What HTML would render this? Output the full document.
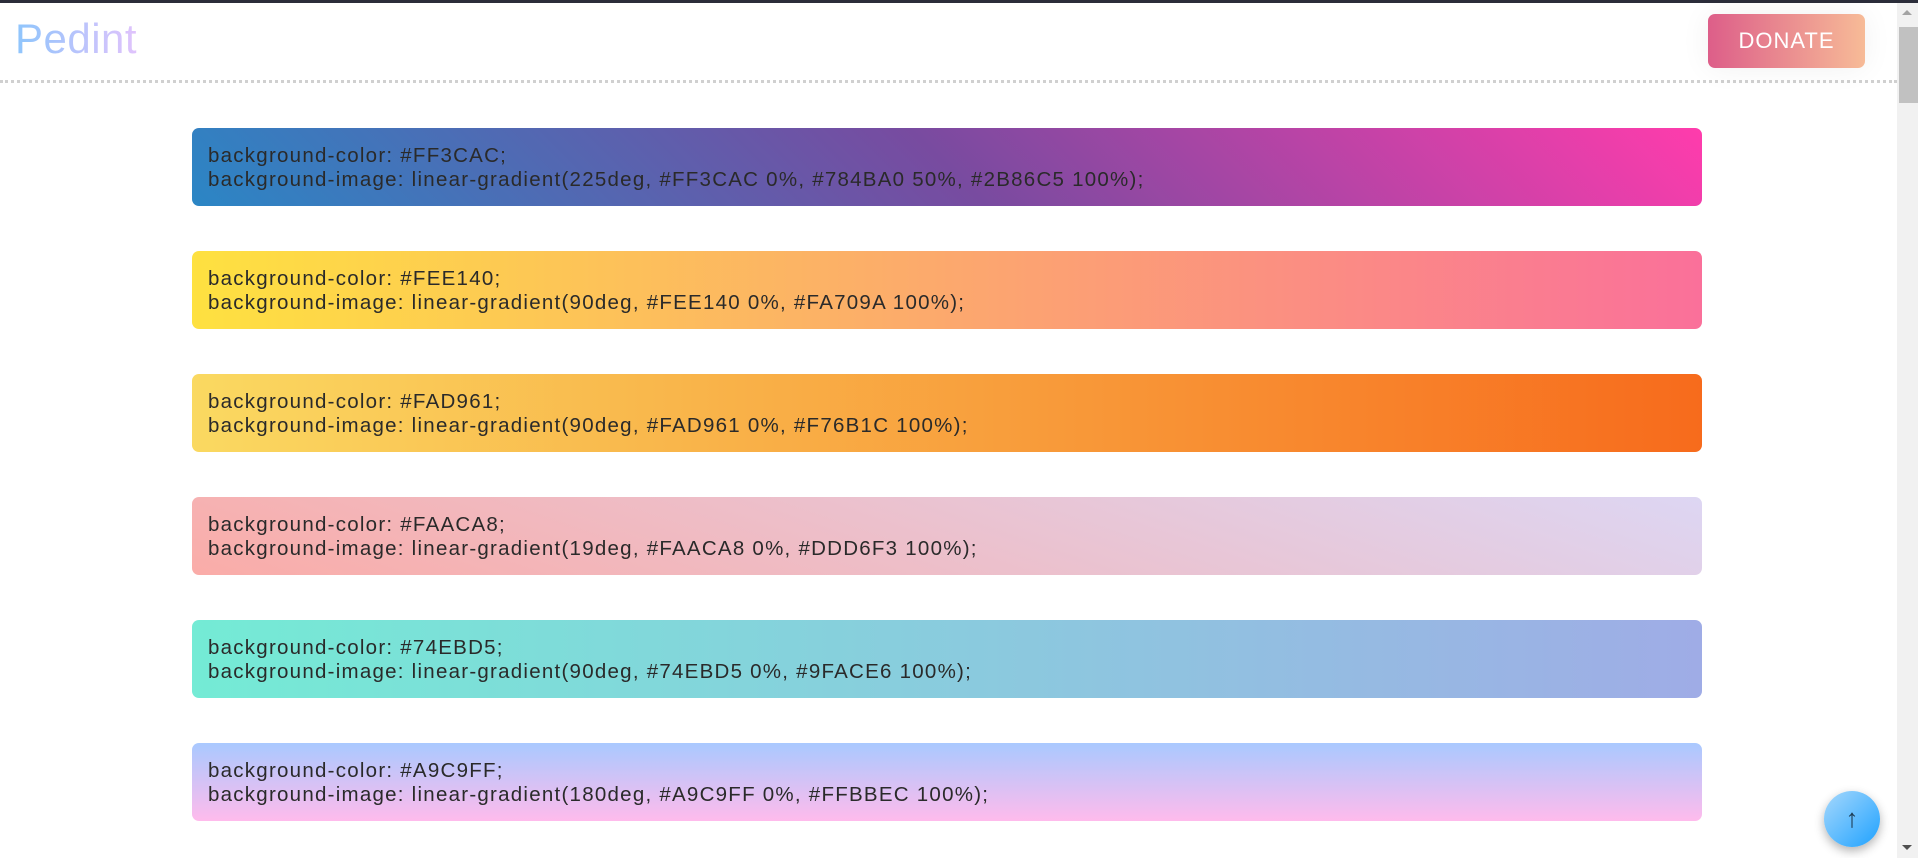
<!DOCTYPE html>
<html><head><meta charset="utf-8"><style>
html,body{margin:0;padding:0;width:1918px;height:858px;overflow:hidden;background:#fff;font-family:"Liberation Sans",sans-serif}
.top{position:absolute;left:0;top:0;width:1918px;height:3px;background:#2b2d3a}
.logo{position:absolute;left:15px;top:13px;font-size:42px;font-weight:300;line-height:52px;background:linear-gradient(90deg,#8ec5fc,#e0c3fc);-webkit-background-clip:text;color:transparent;letter-spacing:0.5px}
.dash{position:absolute;left:0;top:80px;width:1897px;border-top:3px dotted #d0d0d0}
.donate{position:absolute;left:1708px;top:14px;width:157px;height:54px;border-radius:7px;background:linear-gradient(90deg,#dd5e89,#f7bb97);color:#fff;font-size:22px;line-height:54px;text-align:center;letter-spacing:1px;box-shadow:0 0 30px rgba(0,0,0,.06)}
.sb{position:absolute;left:1897px;top:3px;width:21px;height:855px;background:#f1f1f1}
.thumb{position:absolute;left:1899px;top:27px;width:19px;height:76px;background:#c1c1c1}
.card{position:absolute;left:192px;width:1510px;height:78px;border-radius:7px;box-sizing:border-box;padding:16px 0 0 16px;font-size:20.5px;line-height:24px;color:#2a2a2a;letter-spacing:1.25px;white-space:nowrap}
.up{position:absolute;left:1824px;top:791px;width:56px;height:56px;border-radius:50%;background:linear-gradient(135deg,#a6d8fc,#1fa2ff);box-shadow:0 4px 10px rgba(0,0,0,.3);color:#1e3d55;font-size:26px;text-align:center;line-height:54px}
</style></head><body>
<div class="top"></div>
<div class="logo">Pedint</div>
<div class="dash"></div>
<div class="donate">DONATE</div>
<div class="sb"></div><div class="thumb"></div>
<div style="position:absolute;left:1902px;top:10px;width:0;height:0;border-left:5px solid transparent;border-right:5px solid transparent;border-bottom:5px solid #a3a3a3"></div>
<div style="position:absolute;left:1902px;top:845px;width:0;height:0;border-left:5px solid transparent;border-right:5px solid transparent;border-top:5px solid #505050"></div>

<div class="card" style="top:128px;background:linear-gradient(225deg,#FF3CAC 0%,#784BA0 50%,#2B86C5 100%)">background-color: #FF3CAC;<br>background-image: linear-gradient(225deg, #FF3CAC 0%, #784BA0 50%, #2B86C5 100%);</div>
<div class="card" style="top:251px;background:linear-gradient(90deg,#FEE140 0%,#FA709A 100%)">background-color: #FEE140;<br>background-image: linear-gradient(90deg, #FEE140 0%, #FA709A 100%);</div>
<div class="card" style="top:374px;background:linear-gradient(90deg,#FAD961 0%,#F76B1C 100%)">background-color: #FAD961;<br>background-image: linear-gradient(90deg, #FAD961 0%, #F76B1C 100%);</div>
<div class="card" style="top:497px;background:linear-gradient(19deg,#FAACA8 0%,#DDD6F3 100%)">background-color: #FAACA8;<br>background-image: linear-gradient(19deg, #FAACA8 0%, #DDD6F3 100%);</div>
<div class="card" style="top:620px;background:linear-gradient(90deg,#74EBD5 0%,#9FACE6 100%)">background-color: #74EBD5;<br>background-image: linear-gradient(90deg, #74EBD5 0%, #9FACE6 100%);</div>
<div class="card" style="top:743px;background:linear-gradient(180deg,#A9C9FF 0%,#FFBBEC 100%)">background-color: #A9C9FF;<br>background-image: linear-gradient(180deg, #A9C9FF 0%, #FFBBEC 100%);</div>
<div class="up">↑</div>
</body></html>
